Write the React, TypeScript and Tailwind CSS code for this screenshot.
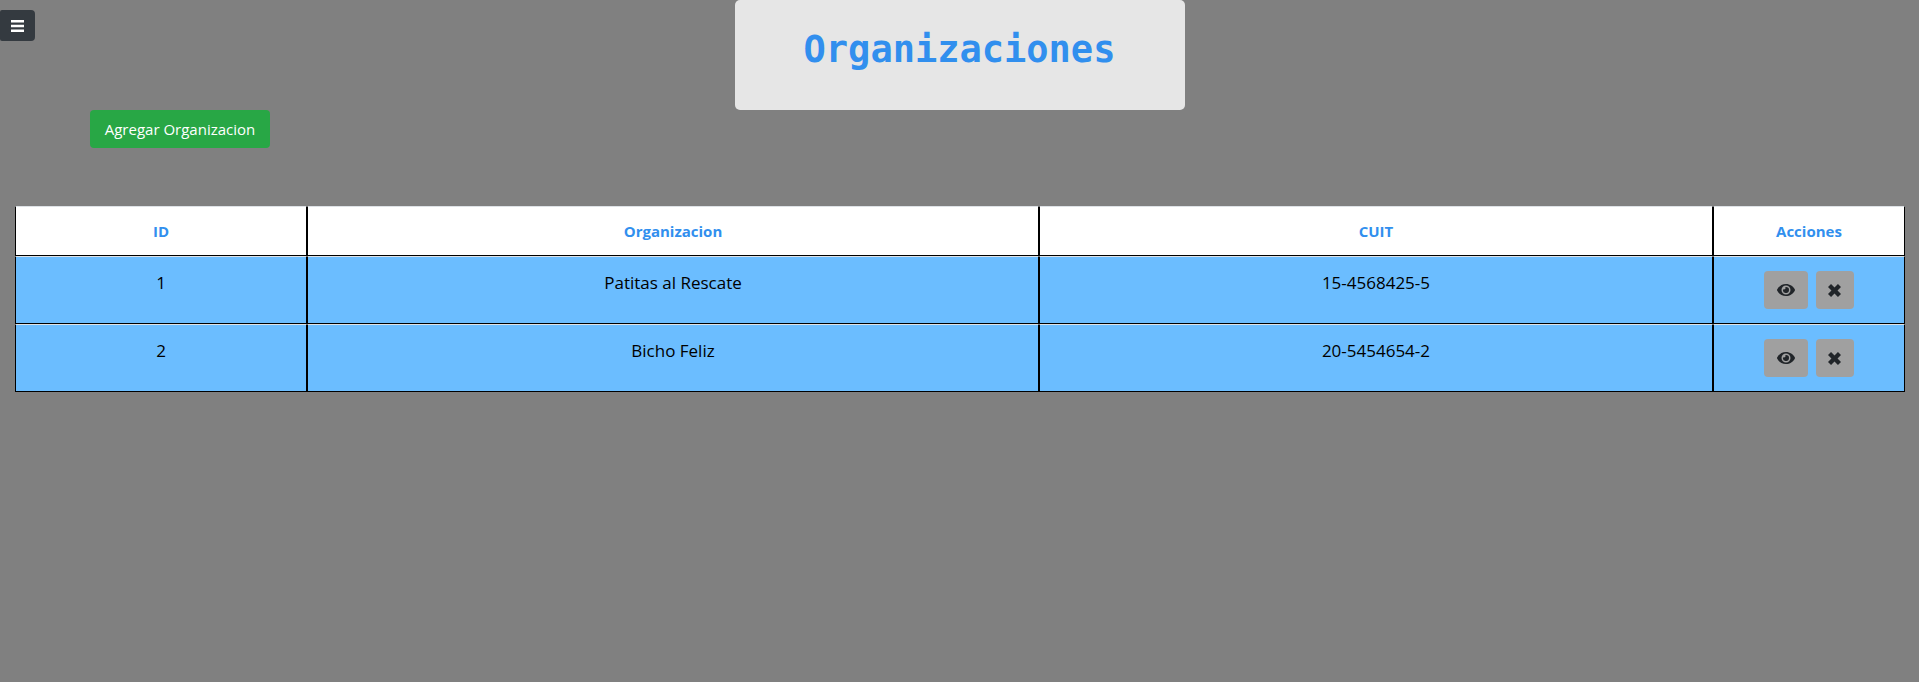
import React from "react";
import { FaEye } from "react-icons/fa";

type Organization = { id: number; name: string; cuit: string };

const organizations: Organization[] = [
  { id: 1, name: "Patitas al Rescate", cuit: "15-4568425-5" },
  { id: 2, name: "Bicho Feliz", cuit: "20-5454654-2" },
];

const headCell =
  "border border-black border-t-[#dee2e6] bg-white p-3 text-center text-[15px] leading-6 font-bold text-[#318fee]";
const bodyCell =
  "border border-black border-t-[#dee2e6] bg-[#6bbdff] px-3 py-[14px] text-center align-top text-[17px] leading-6 text-black";
const actionButton =
  "flex h-[38px] items-center justify-center rounded bg-[#a0a0a0] text-[#212529]";

function CrossIcon() {
  return (
    <svg viewBox="0 0 12 12" className="size-[13px]" fill="currentColor" aria-hidden="true">
      <path d="M2.8 0 6 3.2 9.2 0 12 2.8 8.8 6 12 9.2 9.2 12 6 8.8 2.8 12 0 9.2 3.2 6 0 2.8Z" />
    </svg>
  );
}

function MenuIcon() {
  return (
    <svg viewBox="0 0 13 12" className="h-3 w-[13px]" fill="currentColor" aria-hidden="true">
      <path d="M0 0h13v2.6H0zM0 4.7h13v2.6H0zM0 9.4h13V12H0z" />
    </svg>
  );
}

export default function App() {
  return (
    <div className="relative min-h-screen bg-[#808080] font-['Open_Sans','Noto_Sans',sans-serif]">
      <button
        type="button"
        aria-label="Menu"
        className="absolute top-[10px] left-0 flex h-[31px] w-[35px] items-center rounded-l-xs rounded-r bg-[#343a40] pl-[11px] text-white"
      >
        <MenuIcon />
      </button>

      <header className="mx-auto h-[110px] w-[450px] rounded-[5px] bg-[#e6e6e6] pt-[26px] text-center">
        <h1 className="font-['DejaVu_Sans_Mono',monospace] text-[37px] leading-[48px] font-bold text-[#318fee]">
          Organizaciones
        </h1>
      </header>

      <main className="pr-[14px] pl-[15px]">
        <button
          type="button"
          className="ml-[75px] flex h-[38px] w-[180px] items-center justify-center rounded bg-[#28a745] text-[15px] leading-6 text-white"
        >
          Agregar Organizacion
        </button>

        <table className="mt-[58px] w-full table-fixed border-separate border-spacing-0">
          <thead>
            <tr>
              <th className={`${headCell} w-[15.45%]`}>ID</th>
              <th className={`${headCell} w-[38.73%]`}>Organizacion</th>
              <th className={`${headCell} w-[35.66%]`}>CUIT</th>
              <th className={headCell}>Acciones</th>
            </tr>
          </thead>
          <tbody>
            {organizations.map((org) => (
              <tr key={org.id}>
                <td className={bodyCell}>{org.id}</td>
                <td className={bodyCell}>{org.name}</td>
                <td className={bodyCell}>{org.cuit}</td>
                <td className={bodyCell}>
                  <div className="flex justify-center gap-2">
                    <button
                      type="button"
                      aria-label={`Ver ${org.name}`}
                      className={`${actionButton} w-11`}
                    >
                      <FaEye className="h-4 w-[18px]" aria-hidden="true" />
                    </button>
                    <button
                      type="button"
                      aria-label={`Eliminar ${org.name}`}
                      className={`${actionButton} w-[38px]`}
                    >
                      <CrossIcon />
                    </button>
                  </div>
                </td>
              </tr>
            ))}
          </tbody>
        </table>
      </main>
    </div>
  );
}
